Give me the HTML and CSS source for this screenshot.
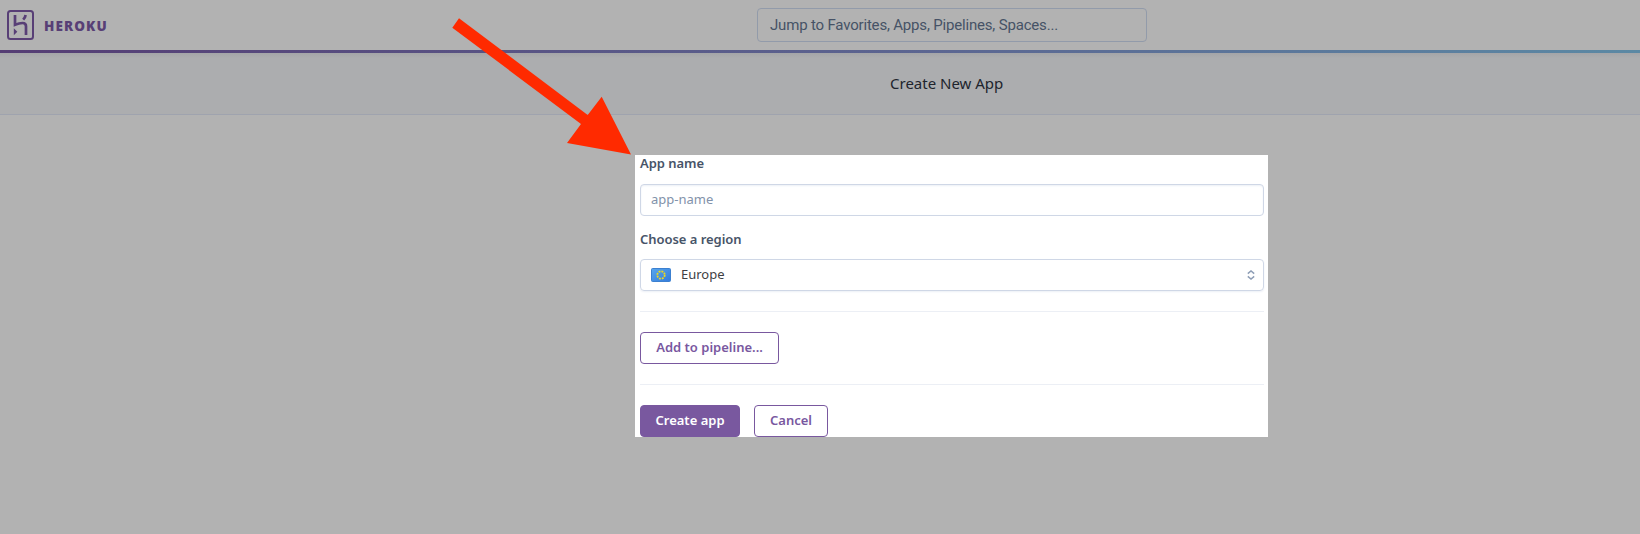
FILE: index.html
```html
<!DOCTYPE html>
<html lang="en">
<head>
<meta charset="utf-8">
<title>Create New App | Heroku</title>
<link rel="stylesheet" href="styles.css">
</head>
<body>
<header class="topbar">
  <div class="brand">
    <svg class="brand-mark" width="27" height="30" viewBox="0 0 27 30">
      <rect x="1" y="1" width="25" height="28" rx="2.5" fill="none" stroke="currentColor" stroke-width="2"/>
      <path d="M8 5v9.800c2.600-1.100 5-1.800 7.600-1.800 2.800 0 3.400 1.600 3.400 3.200V25M18.600 5c-.2 1.700-1 3.200-2.400 4.700" fill="none" stroke="currentColor" stroke-width="2.700"/>
      <path d="M6.800 18.200v7l3.500-3.500z" fill="currentColor"/>
    </svg>
    <span class="brand-name">HEROKU</span>
  </div>
  <div class="search"><span class="search-text">Jump to Favorites, Apps, Pipelines, Spaces...</span></div>
</header>
<div class="subheader"><h1 class="page-title">Create New App</h1></div>
<main class="content">
  <form class="panel">
    <label class="label label-name">App name</label>
    <div class="field"><span class="placeholder">app-name</span></div>
    <label class="label label-region">Choose a region</label>
    <div class="field select">
      <svg class="flag" width="20" height="14" viewBox="0 0 20 14">
        <defs><linearGradient id="eu" x1="0" y1="0" x2="1" y2="1"><stop offset="0" stop-color="#58a7ed"/><stop offset="1" stop-color="#347bdc"/></linearGradient></defs>
        <rect x=".5" y=".5" width="19" height="13" rx="1" fill="url(#eu)" stroke="#3c80d0"/>
        <circle cx="10" cy="7" r="3.700" fill="none" stroke="#ecd820" stroke-width="1.800" stroke-dasharray="1.900 1.006"/>
      </svg>
      <span class="region">Europe</span>
      <svg class="chevrons" width="8" height="10" viewBox="0 0 8 10"><path d="M.8 3.600 4 .9l3.200 2.700M.8 6.400 4 9.100l3.200-2.700" fill="none" stroke="#8d9db5" stroke-width="1.400"/></svg>
    </div>
    <div class="section"><span class="button pipeline"><span>Add to pipeline...</span></span></div>
    <div class="section actions"><span class="button primary"><span>Create app</span></span><span class="button cancel"><span>Cancel</span></span></div>
  </form>
</main>
<svg class="arrow" width="180" height="138" viewBox="452 17 180 138"><path d="M459 18.300 587.700 115l14-18.300 29.300 57.800-64-11.500 14-19L452.300 27.700z" fill="#ff2a00"/></svg>
</body>
</html>
```
FILE: styles.css
```css
* { box-sizing: border-box; }
body { margin: 0; height: 534px; overflow: hidden; background: #b2b2b2; font-family: "Noto Sans", "Open Sans", sans-serif; font-size: 13px; color: #2a303c; }
.topbar { height: 53px; display: flex; align-items: flex-start; padding: 8px 493px 0 7px; justify-content: space-between; border-bottom: 3px solid; border-image: linear-gradient(90deg, #553d74, #5c6792 58%, #5c89a4) 1; }
.brand { display: flex; align-items: flex-start; gap: 10px; padding-top: 2px; color: #583f76; }
.brand-mark { display: block; }
.brand-name { font: 800 13.5px/33px "Open Sans", sans-serif; letter-spacing: 1.1px; white-space: nowrap; }
.search { width: 390px; height: 34px; border: 1px solid #929baa; border-radius: 4px; padding-left: 12px; line-height: 32px; color: #465266; }
.search-text { font-family: Roboto, sans-serif; font-size: 15px; letter-spacing: -.18px; white-space: nowrap; }
.subheader { height: 62px; padding-left: 890px; border-bottom: 1px solid #9fa3ae; background: linear-gradient(#a4a5a8, #acadaf 5px); }
.page-title { margin: 0; font-size: 15px; font-weight: 400; line-height: 61px; color: #20242d; white-space: nowrap; }
.content { padding: 40px 0 0 635px; }
.panel { width: 633px; height: 282px; padding: 0 4px 0 5px; background: #fff; }
.label { display: block; font-weight: 600; letter-spacing: -.04px; color: #475468; line-height: 17px; }
.label-name { height: 29px; }
.label-region { height: 43px; padding-top: 15px; }
.field { height: 32px; border: 1px solid #cfd7e6; border-radius: 4px; padding: 0 8px 0 10px; display: flex; align-items: center; box-shadow: inset 0 1px 2px #edf0f6; }
.placeholder { color: #8292aa; padding-bottom: 2px; }
.select { box-shadow: 0 1px 2px #edf0f6; }
.flag { margin-right: 10px; }
.region { color: #3f3f44; padding-bottom: 2px; }
.chevrons { margin-left: auto; }
.section { height: 73px; margin-top: 20px; padding-top: 20px; border-top: 1px solid #eceff5; }
.section.actions { height: 53px; margin-top: 0; display: flex; gap: 14px; }
.button { display: flex; justify-content: center; align-items: center; height: 32px; padding-bottom: 2px; border: 1px solid #79589f; border-radius: 4px; color: #79589f; font-weight: 600; white-space: nowrap; }
.pipeline { width: 139px; }
.primary { width: 100px; background: #79589f; color: #fff; }
.cancel { width: 74px; }
.arrow { position: absolute; left: 452px; top: 17px; }
```
